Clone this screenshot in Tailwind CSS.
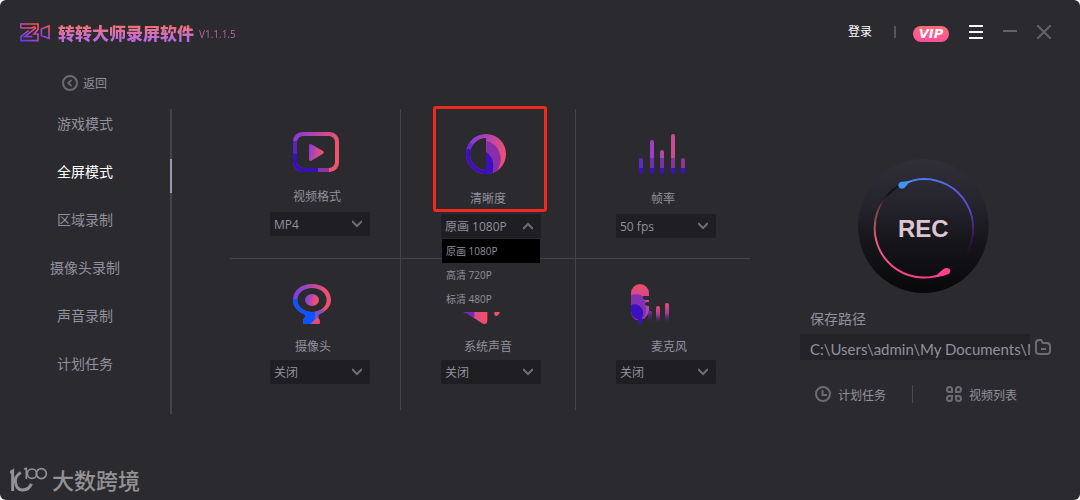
<!DOCTYPE html>
<html lang="zh-CN">
  <head>
    <meta charset="UTF-8" />
    <meta name="viewport" content="width=device-width, initial-scale=1.0" />
    <title>转转大师录屏软件</title>
    <script src="https://cdn.jsdelivr.net/npm/@tailwindcss/browser@4"></script>
  </head>
  <body class="bg-white">
    <div
      class="relative flex flex-col min-h-screen rounded-md bg-[#2b2a2e] text-[#92919d] font-['Open_Sans','Noto_Sans_CJK_SC',sans-serif] text-xs"
    >
      <header class="flex items-center justify-between h-16 pl-5 pr-[29px]">
        <div class="flex items-center">
          <svg class="w-[31px] h-[19px]" viewBox="0 0 93 57" fill="none">
            <defs>
              <linearGradient id="logo" x1="0" y1="1" x2="0.7" y2="0">
                <stop offset="0" stop-color="#5a3cf0" />
                <stop offset="0.5" stop-color="#a845c8" />
                <stop offset="1" stop-color="#ee5065" />
              </linearGradient>
            </defs>
            <g stroke="url(#logo)" stroke-width="5">
              <path d="M2 16V3H54V19L42 33H54V53H3V40L26 23" />
              <path d="M2 15H34L44 12L46 16L14 41H37" />
              <path d="M87 9V46L64 38V18Z" />
            </g>
          </svg>
          <h1
            class="mt-1 ml-[7px] text-[17px] leading-6 font-black bg-linear-to-b from-[#f0707c] from-20% to-[#b868e8] to-80% bg-clip-text text-transparent"
          >
            转转大师录屏软件
          </h1>
          <span
            class="ml-[5px] mt-1 text-[10px] leading-4 bg-linear-to-b from-[#e8607c] to-[#a062d8] bg-clip-text text-transparent"
            >V1.1.1.5</span
          >
        </div>
        <!-- Logo -->
        <div class="flex items-center">
          <a href="#" class="text-white leading-4">登录</a>
          <span class="ml-[22px] w-0.5 h-3 bg-[#55545f]"></span>
          <a
            href="#"
            class="ml-[17px] mt-1 w-9 h-4 rounded-full bg-linear-to-b from-[#ff6b70] to-[#f94f9c] text-white text-center text-[13px] leading-4 font-bold italic font-['DejaVu_Sans',sans-serif]"
            >VIP</a
          >
          <button class="ml-5" aria-label="菜单">
            <svg class="size-3.5" viewBox="0 0 14 14">
              <path d="M0 1H14M0 7H14M0 13H14" stroke="#fff" stroke-width="2" />
            </svg>
          </button>
          <button class="ml-5" aria-label="最小化">
            <svg class="size-3.5" viewBox="0 0 14 14">
              <path d="M0 6H14" stroke="#62616c" stroke-width="2" />
            </svg>
          </button>
          <button class="ml-5" aria-label="关闭窗口">
            <svg class="size-3.5" viewBox="0 0 14 14">
              <path d="M0 0L14 14M14 0L0 14" stroke="#62616c" stroke-width="2" />
            </svg>
          </button>
        </div>
        <!-- Window buttons -->
      </header>

      <main class="flex flex-1">
        <aside class="w-[170px] shrink-0 pt-2.5">
          <a href="#" class="flex items-center h-[18px] pl-[62px]">
            <svg class="size-4" viewBox="0 0 16 16" fill="none" stroke="#6b6a74">
              <circle cx="8" cy="8" r="7" stroke-width="2" />
              <path d="M9.5 4.8L6.2 8L9.5 11.2" stroke-width="1.8" />
            </svg>
            <span class="ml-[5px] pt-0.5 leading-4">返回</span>
          </a>
          <nav class="mt-2 text-sm text-center">
            <a href="#" class="block h-12 leading-12">游戏模式</a>
            <a href="#" class="block h-12 leading-12 text-white">全屏模式</a>
            <a href="#" class="block h-12 leading-12">区域录制</a>
            <a href="#" class="block h-12 leading-12">摄像头录制</a>
            <a href="#" class="block h-12 leading-12">声音录制</a>
            <a href="#" class="block h-12 leading-12">计划任务</a>
          </nav>
        </aside>
        <!-- Side navigation -->
        <div class="mt-[45px] w-0.5 h-[305px] shrink-0 bg-[#44434b] pt-[50px]">
          <div class="h-[34px] bg-[#9a99ab]"></div>
        </div>

        <section
          class="grid flex-1 mt-[45px] ml-[58px] mr-[50px] self-start grid-cols-[171fr_175fr_174fr]"
        >
          <div class="h-[150px] pt-[23px] pl-10 border-r border-b border-[#45444b]">
            <div class="w-[94px] flex flex-col items-center">
              <svg class="w-12 h-10" viewBox="0 0 144 120" fill="none">
                <defs>
                  <linearGradient id="video" x1="0" y1="0" x2="1" y2="0.3">
                    <stop offset="0" stop-color="#8438e0" />
                    <stop offset="1" stop-color="#f05468" />
                  </linearGradient>
                  <clipPath id="videoRing">
                    <path
                      clip-rule="evenodd"
                      d="M28 0H110A28 28 0 0 1 138 28V92A28 28 0 0 1 110 120H28A28 28 0 0 1 0 92V28A28 28 0 0 1 28 0ZM30 12A18 18 0 0 0 12 30V90A18 18 0 0 0 30 108H108A18 18 0 0 0 126 90V30A18 18 0 0 0 108 12Z"
                    />
                  </clipPath>
                </defs>
                <g clip-path="url(#videoRing)">
                  <rect width="138" height="120" fill="url(#video)" />
                  <rect y="27" width="30" height="37" fill="#5a25bd" />
                  <rect y="64" width="30" height="56" fill="#3510b8" />
                  <rect x="20" y="100" width="55" height="20" fill="#3510b8" />
                  <rect x="75" y="100" width="33" height="20" fill="#8c34a4" />
                </g>
                <path
                  d="M48 41Q48 33 55 37L90 57Q95 61 90 65L55 86Q48 90 48 82Z"
                  fill="url(#video)"
                />
              </svg>
              <label for="format" class="mt-[15px] mb-[5px] leading-5">视频格式</label>
            </div>
            <div class="relative w-[100px]">
              <select
                id="format"
                class="block w-full h-6 pl-1 pt-0.5 appearance-none rounded-xs bg-[#1f1e23]"
              >
                <option>MP4</option>
              </select>
              <svg
                class="absolute right-2 top-2 w-2.5 h-2 pointer-events-none"
                viewBox="0 0 10 8"
              >
                <path d="M0 1L5 6L10 1" fill="none" stroke="#6d6c75" stroke-width="2" />
              </svg>
            </div>
          </div>
          <!-- Video format -->

          <div
            class="relative h-[150px] pt-[25px] pl-10 border-r border-b border-[#45444b]"
          >
            <div
              class="absolute left-8 -top-[3px] w-[114px] h-[106px] border-3 border-[#ee2a1e] rounded-[3px]"
            ></div>
            <div class="w-[94px] flex flex-col items-center">
              <svg class="w-11 h-10" viewBox="0 0 132 120" fill="none">
                <defs>
                  <linearGradient id="disc" x1="0" y1="0.2" x2="1" y2="0.5">
                    <stop offset="0" stop-color="#7c38e8" />
                    <stop offset="1" stop-color="#f05070" />
                  </linearGradient>
                  <clipPath id="discShape">
                    <path
                      d="M60 0A60 60 0 0 1 60 120A60 60 0 0 1 60 0ZM60 12A48 48 0 0 0 60 108Z"
                      clip-rule="evenodd"
                    />
                  </clipPath>
                </defs>
                <g clip-path="url(#discShape)">
                  <rect width="120" height="120" fill="url(#disc)" />
                  <path d="M61 20Q104 34 104 78Q102 100 90 115L60 120Z" fill="#8a2da8" />
                  <path d="M61 54Q84 72 82 98L80 120H50V54Z" fill="#3a10c0" />
                  <path d="M0 44H24L12 70L60 104V120H0Z" fill="#3a10c0" />
                  <path d="M0 44L10 24L26 34L16 46Z" fill="#6a2ccc" />
                </g>
              </svg>
              <label for="quality" class="mt-[15px] mb-[5px] leading-5">清晰度</label>
            </div>
            <div class="relative w-[100px]">
              <select
                id="quality"
                class="block w-full h-6 pl-1 pt-0.5 appearance-none rounded-xs bg-[#1f1e23]"
              >
                <option>原画 1080P</option>
                <option>高清 720P</option>
                <option>标清 480P</option>
              </select>
              <svg
                class="absolute right-2 top-2 w-2.5 h-2 pointer-events-none"
                viewBox="0 0 10 8"
              >
                <path d="M0 7L5 2L10 7" fill="none" stroke="#6d6c75" stroke-width="2" />
              </svg>
              <ul
                class="absolute left-px right-px top-[25px] z-10 pb-px bg-[#2b2a2e] text-[10px] leading-6"
              >
                <li class="h-6 pl-1 bg-black">原画 1080P</li>
                <li class="h-6 pl-1">高清 720P</li>
                <li class="h-6 pl-1">标清 480P</li>
              </ul>
            </div>
          </div>
          <!-- Quality, list open -->

          <div class="h-[150px] pt-[25px] pl-10 border-b border-[#45444b]">
            <div class="w-[94px] flex flex-col items-center">
              <svg class="w-12 h-10" viewBox="0 0 144 120">
                <defs>
                  <linearGradient id="bars" gradientUnits="userSpaceOnUse" x1="0" y1="0" x2="138" y2="0">
                    <stop offset="0.1" stop-color="#8c3ae0" />
                    <stop offset="0.8" stop-color="#cc5088" />
                  </linearGradient>
                  <linearGradient id="barsMid" gradientUnits="userSpaceOnUse" x1="0" y1="0" x2="138" y2="0">
                    <stop offset="0" stop-color="#5c2cc0" />
                    <stop offset="1" stop-color="#943a88" />
                  </linearGradient>
                  <clipPath id="barShapes">
                    <rect x="0" y="72" width="12" height="48" rx="6" />
                    <rect x="33" y="18" width="12" height="102" rx="6" />
                    <rect x="63" y="48" width="12" height="72" rx="6" />
                    <rect x="96" y="0" width="12" height="120" rx="6" />
                    <rect x="126" y="72" width="12" height="48" rx="6" />
                  </clipPath>
                </defs>
                <g clip-path="url(#barShapes)">
                  <rect width="138" height="72" fill="url(#bars)" />
                  <rect y="72" width="138" height="30" fill="url(#barsMid)" />
                  <rect y="102" width="138" height="18" fill="#3a10c0" />
                </g>
              </svg>
              <label for="fps" class="mt-[15px] mb-[5px] leading-5">帧率</label>
            </div>
            <div class="relative w-[100px]">
              <select
                id="fps"
                class="block w-full h-6 pl-1 pt-0.5 appearance-none rounded-xs bg-[#1f1e23]"
              >
                <option>50 fps</option>
              </select>
              <svg
                class="absolute right-2 top-2 w-2.5 h-2 pointer-events-none"
                viewBox="0 0 10 8"
              >
                <path d="M0 1L5 6L10 1" fill="none" stroke="#6d6c75" stroke-width="2" />
              </svg>
            </div>
          </div>
          <!-- Frame rate -->

          <div class="h-[151px] pt-[25px] pl-10 border-r border-[#45444b]">
            <div class="w-[86px] flex flex-col items-center">
              <svg class="w-10 h-10" viewBox="0 0 120 120" fill="none">
                <defs>
                  <linearGradient id="cam" x1="0" y1="0" x2="1" y2="0.2">
                    <stop offset="0.1" stop-color="#8040e0" />
                    <stop offset="0.9" stop-color="#f0506c" />
                  </linearGradient>
                  <clipPath id="camShape">
                    <path
                      clip-rule="evenodd"
                      d="M57 0C90 0 114 20 114 48C114 68 98 84 76 92V102Q82 106 81 116Q81 120 76 120H34Q29 120 30 114Q30 104 36 100V92C14 84 0 68 0 48C0 20 24 0 57 0ZM57 12C32 12 13 28 13 48C13 68 32 84 57 84C82 84 101 68 101 48C101 28 82 12 57 12Z"
                    />
                  </clipPath>
                </defs>
                <g clip-path="url(#camShape)">
                  <rect width="114" height="120" fill="url(#cam)" />
                  <path d="M0 46H18L26 72L57 84H92L68 96V104L52 120H0Z" fill="#0a55ff" />
                  <path d="M66 84L92 76L94 90L78 98L66 102Z" fill="#7a50c8" />
                </g>
                <ellipse cx="57" cy="48" rx="21" ry="18" fill="url(#cam)" />
              </svg>
              <label for="camera" class="mt-[13px] mb-[3px] leading-5">摄像头</label>
            </div>
            <div class="relative w-[100px]">
              <select
                id="camera"
                class="block w-full h-6 pl-1 pt-0.5 appearance-none rounded-xs bg-[#1f1e23]"
              >
                <option>关闭</option>
              </select>
              <svg
                class="absolute right-2 top-2 w-2.5 h-2 pointer-events-none"
                viewBox="0 0 10 8"
              >
                <path d="M0 1L5 6L10 1" fill="none" stroke="#6d6c75" stroke-width="2" />
              </svg>
            </div>
          </div>
          <!-- Camera -->

          <div class="h-[151px] pt-[25px] pl-10 border-r border-[#45444b]">
            <div class="w-[94px] flex flex-col items-center">
              <svg class="w-14 h-10" viewBox="0 0 168 120">
                <defs>
                  <linearGradient id="horn" x1="0" y1="0" x2="1" y2="0">
                    <stop offset="0.6" stop-color="#dd4a88" />
                    <stop offset="1" stop-color="#fa5060" />
                  </linearGradient>
                </defs>
                <path
                  d="M0 40Q0 32 8 32H24L66 3Q82 -4 82 12V108Q82 124 66 118L24 90L0 80Z"
                  fill="url(#horn)"
                />
                <path d="M0 40H43V103L24 90L0 80Z" fill="#7a28b0" />
                <path d="M0 40H12V90H20L24 90L0 80Z" fill="#3a10c0" />
                <path
                  d="M106 86Q126 60 106 28"
                  fill="none"
                  stroke="#fa5060"
                  stroke-width="9"
                />
                <path d="M104 84H120Q114 98 107 96Q100 92 104 84Z" fill="#f05068" />
              </svg>
              <label for="sound" class="mt-[13px] mb-[3px] leading-5">系统声音</label>
            </div>
            <div class="relative w-[100px]">
              <select
                id="sound"
                class="block w-full h-6 pl-1 pt-0.5 appearance-none rounded-xs bg-[#1f1e23]"
              >
                <option>关闭</option>
              </select>
              <svg
                class="absolute right-2 top-2 w-2.5 h-2 pointer-events-none"
                viewBox="0 0 10 8"
              >
                <path d="M0 1L5 6L10 1" fill="none" stroke="#6d6c75" stroke-width="2" />
              </svg>
            </div>
          </div>
          <!-- System sound -->

          <div class="h-[151px] pt-[25px] pl-10">
            <div class="w-[106px] flex flex-col items-center">
              <svg class="w-[76px] h-10" viewBox="0 0 228 120">
                <defs>
                  <linearGradient id="mic" x1="0" y1="0" x2="0" y2="1">
                    <stop offset="0" stop-color="#ee4c6c" />
                    <stop offset="0.5" stop-color="#c8489a" />
                    <stop offset="1" stop-color="#a040c8" />
                  </linearGradient>
                  <linearGradient id="fade" x1="0" y1="0" x2="0" y2="1">
                    <stop offset="0" stop-color="#ea4c70" />
                    <stop offset="0.5" stop-color="#a83c98" />
                    <stop offset="1" stop-color="#3a2060" stop-opacity="0" />
                  </linearGradient>
                  <linearGradient id="fadeLow" x1="0" y1="0" x2="0" y2="1">
                    <stop offset="0" stop-color="#7c3aa8" />
                    <stop offset="1" stop-color="#3a2060" stop-opacity="0" />
                  </linearGradient>
                </defs>
                <path
                  d="M0 27A27 27 0 0 1 54 27V36H40Q32 36 34 42Q36 48 44 48H54V54H48Q40 56 42 62Q44 66 54 66V80Q50 96 40 104H14Q0 96 0 80Z"
                  fill="url(#mic)"
                />
                <path
                  d="M0 34Q18 26 34 36Q32 44 38 48Q44 50 44 54Q40 58 43 66Q46 68 45 82Q44 102 30 108H14Q0 98 0 80Z"
                  fill="#8230b4"
                />
                <path
                  d="M0 64Q16 56 28 68Q38 78 36 90Q35 98 33 102V116Q33 120 28 120H26Q21 120 21 114V106Q0 98 0 80Z"
                  fill="#3a10c0"
                />
                <rect x="51" y="80" width="12" height="38" rx="6" fill="url(#fadeLow)" />
                <rect x="75" y="66" width="12" height="52" rx="6" fill="url(#fade)" />
                <rect x="102" y="57" width="12" height="61" rx="6" fill="url(#fade)" />
              </svg>
              <label for="mic-in" class="mt-[13px] mb-[3px] leading-5">麦克风</label>
            </div>
            <div class="relative w-[100px]">
              <select
                id="mic-in"
                class="block w-full h-6 pl-1 pt-0.5 appearance-none rounded-xs bg-[#1f1e23]"
              >
                <option>关闭</option>
              </select>
              <svg
                class="absolute right-2 top-2 w-2.5 h-2 pointer-events-none"
                viewBox="0 0 10 8"
              >
                <path d="M0 1L5 6L10 1" fill="none" stroke="#6d6c75" stroke-width="2" />
              </svg>
            </div>
          </div>
          <!-- Microphone -->
        </section>

        <section class="w-[280px] shrink-0 pt-[95px]">
          <button class="block ml-[58px] rounded-full">
            <svg class="w-[131px] h-[134px]" viewBox="56 42 393 402" fill="none">
              <defs>
                <linearGradient id="knob" x1="0" y1="0" x2="0" y2="1">
                  <stop offset="0" stop-color="#302e36" />
                  <stop offset="0.35" stop-color="#25232c" />
                  <stop offset="0.6" stop-color="#17161b" />
                  <stop offset="1" stop-color="#08080a" />
                </linearGradient>
                <linearGradient id="arcBlue" gradientUnits="userSpaceOnUse" x1="230" y1="100" x2="400" y2="330">
                  <stop offset="0" stop-color="#4d7cf0" />
                  <stop offset="0.6" stop-color="#5a48c8" />
                  <stop offset="0.85" stop-color="#3c1450" />
                  <stop offset="1" stop-color="#0c080e" />
                </linearGradient>
                <linearGradient id="arcPink" gradientUnits="userSpaceOnUse" x1="240" y1="400" x2="120" y2="160">
                  <stop offset="0" stop-color="#fa3c8c" />
                  <stop offset="0.6" stop-color="#e8607c" />
                  <stop offset="0.9" stop-color="#6c4440" />
                  <stop offset="1" stop-color="#171316" />
                </linearGradient>
              </defs>
              <ellipse cx="252" cy="243" rx="196" ry="201" fill="url(#knob)" />
              <g stroke-width="6">
                <circle cx="254" cy="250" r="148" stroke="#141116" />
                <path
                  d="M196 115A148 148 0 0 1 254 102A148 148 0 0 1 382 324"
                  stroke="url(#arcBlue)"
                />
                <path
                  d="M314 385A148 148 0 0 1 106 250A148 148 0 0 1 146 149"
                  stroke="url(#arcPink)"
                />
              </g>
              <path
                d="M220 107Q198 108 184 111Q174 116 178 126Q184 134 194 130Q202 122 208 114Z"
                fill="#4093ff"
              />
              <path
                d="M288 394Q302 380 313 372Q322 366 331 372Q336 380 328 387Q312 394 288 397Z"
                fill="#ff4090"
              />
              <text
                x="252"
                y="276"
                text-anchor="middle"
                class="font-['Liberation_Sans',sans-serif] font-bold text-[72px]"
                fill="#dcc6d0"
              >
                REC
              </text>
            </svg>
          </button>
          <label for="path" class="block mt-4 ml-2.5 text-sm leading-5">保存路径</label>
          <div class="flex items-center mt-[5px]">
            <input
              id="path"
              type="text"
              class="w-[230px] h-[26px] pl-2.5 pt-1 bg-[#242328] text-[15px] leading-5 font-['Lato',sans-serif]"
              value="C:\Users\admin\My Documents\My Videos"
              readonly
            />
            <button class="ml-[5px]" aria-label="打开文件夹">
              <svg class="size-4" viewBox="0 0 16 16" fill="none" stroke="#6d6c75" stroke-width="2">
                <path
                  d="M1 4Q1 1 4 1H6L8 4H12Q15 4 15 7V12Q15 15 12 15H4Q1 15 1 12Z"
                />
                <path d="M6 10H11" />
              </svg>
            </button>
          </div>
          <div class="flex items-center mt-6 h-5 ml-[15px]">
            <a href="#" class="flex items-center">
              <svg class="size-4" viewBox="0 0 16 16" fill="none" stroke="#6d6c75" stroke-width="2">
                <circle cx="8" cy="8" r="7" />
                <path d="M7.5 4V9H12" />
              </svg>
              <span class="ml-[7px] pt-1 leading-5">计划任务</span>
            </a>
            <span class="ml-[26px] w-px h-[18px] bg-[#4a4950]"></span>
            <a href="#" class="flex items-center ml-[33px]">
              <svg class="size-4" viewBox="0 0 16 16" fill="none" stroke="#6d6c75" stroke-width="2">
                <path d="M6 6H3.5A2.5 2.5 0 1 1 6 3.5Z" />
                <path d="M10 6H12.5A2.5 2.5 0 1 0 10 3.5Z" />
                <path d="M6 10H3.5A2.5 2.5 0 1 0 6 12.5Z" />
                <path d="M10 10H12.5A2.5 2.5 0 1 1 10 12.5Z" />
              </svg>
              <span class="ml-[7px] pt-1 leading-5">视频列表</span>
            </a>
          </div>
        </section>
        <!-- Record and save path -->
      </main>

      <div
        class="absolute left-2.5 bottom-1.5 flex items-center text-[#939295] text-[22px] leading-7 font-medium"
      >
        <svg class="w-[38px] h-[26px]" viewBox="0 0 114 78" fill="none" stroke="#939295">
          <path d="M0 17L8 12V72" stroke-width="9" />
          <path d="M32 16Q14 30 16 44Q20 70 38 69Q58 68 64 50" stroke-width="9" />
          <path d="M42 6L49 4V36" stroke-width="5" />
          <circle cx="66" cy="20" r="14" stroke-width="5" />
          <circle cx="94" cy="20" r="15" stroke-width="5" />
        </svg>
        <span class="ml-1">大数跨境</span>
      </div>
      <!-- Watermark -->
    </div>
  </body>
</html>
